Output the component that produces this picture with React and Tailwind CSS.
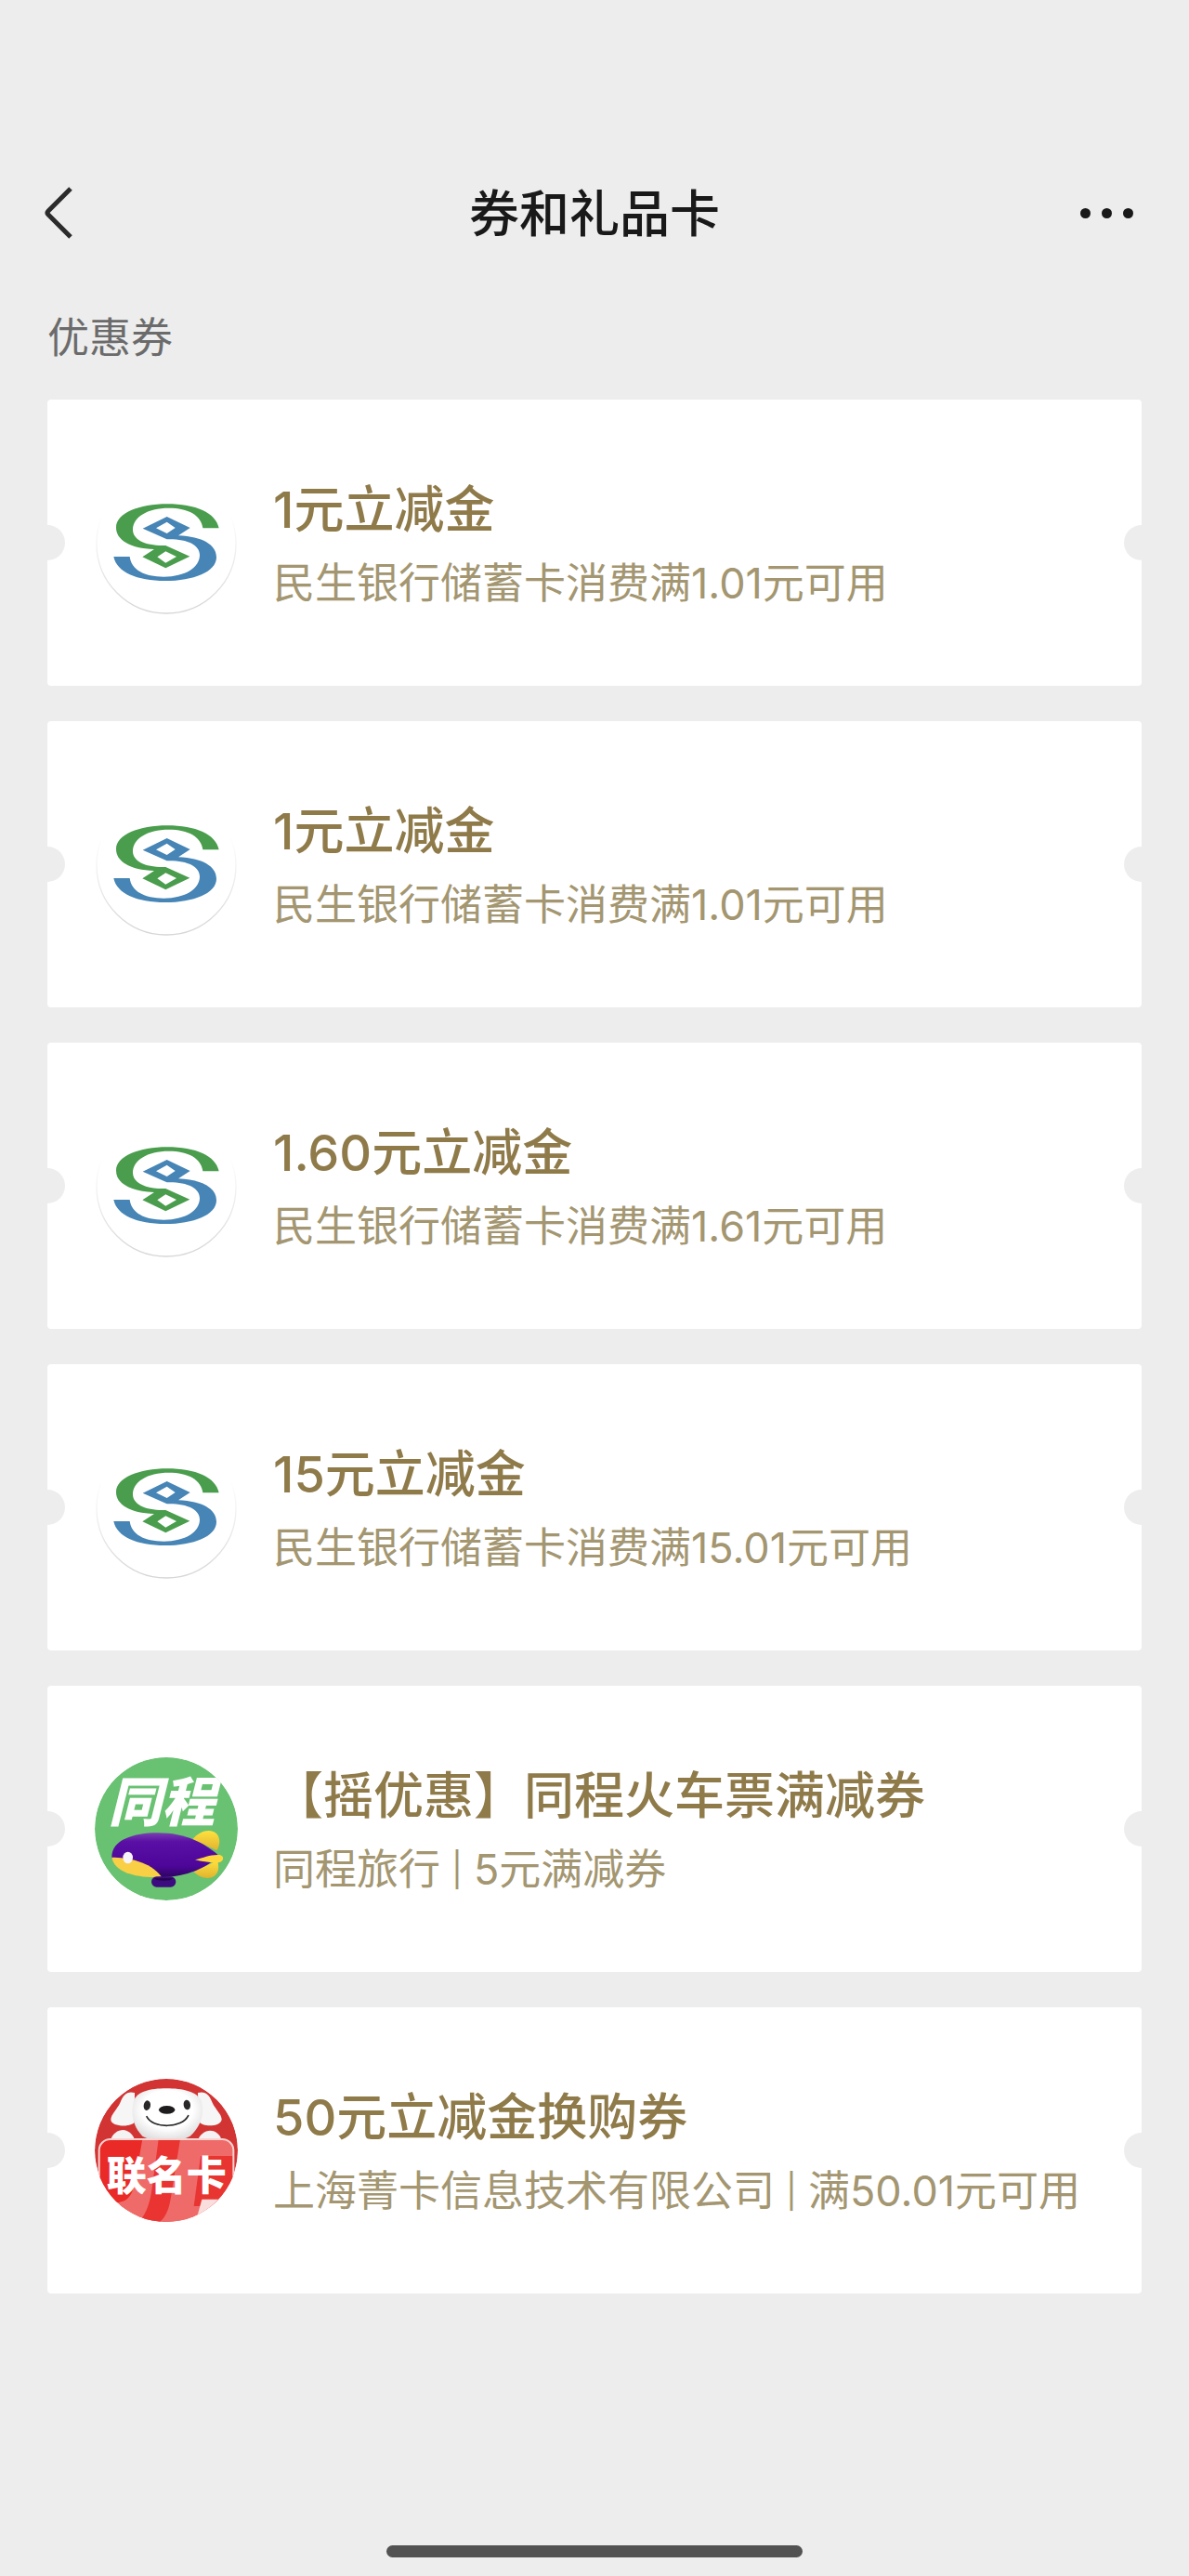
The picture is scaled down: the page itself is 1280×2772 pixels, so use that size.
import { Fragment, useState } from 'react';

const coupons = [
  { id: 1, logo: 'minsheng', title: '1元立减金', desc: ['民生银行储蓄卡消费满1.01元可用'] },
  { id: 2, logo: 'minsheng', title: '1元立减金', desc: ['民生银行储蓄卡消费满1.01元可用'] },
  { id: 3, logo: 'minsheng', title: '1.60元立减金', desc: ['民生银行储蓄卡消费满1.61元可用'] },
  { id: 4, logo: 'minsheng', title: '15元立减金', desc: ['民生银行储蓄卡消费满15.01元可用'] },
  { id: 5, logo: 'tongcheng', title: '【摇优惠】同程火车票满减券', desc: ['同程旅行', '5元满减券'] },
  { id: 6, logo: 'jd', title: '50元立减金换购券', desc: ['上海菁卡信息技术有限公司', '满50.01元可用'] },
];

const S_PATH =
  'M437 175H385C380 133 338 110 275 110C205 110 159 140 159 180C159 213 200 233 265 231L343 266L265 304L190 268L228 243C150 240 105 213 105 173C105 126 180 97 270 97C362 97 427 125 437 175ZM265 250L238 268L265 287L300 267Z';

function MinshengLogo() {
  return (
    <svg viewBox="36 -9 462 462" className="size-full" aria-hidden="true">
      <defs>
        <linearGradient id="ring" x1="0" y1="0" x2="0" y2="1">
          <stop offset="0.3" stopColor="#ffffff" />
          <stop offset="1" stopColor="#d6d6d6" />
        </linearGradient>
      </defs>
      <circle cx="267" cy="225" r="225" fill="#fff" stroke="url(#ring)" strokeWidth="4" />
      <path d={S_PATH} fill="#4a9d4d" fillRule="evenodd" />
      <path d={S_PATH} fill="#4685b5" fillRule="evenodd" transform="rotate(180 267 221)" />
    </svg>
  );
}

function TongchengLogo() {
  return (
    <svg viewBox="36 33 462 462" className="size-full" aria-hidden="true">
      <defs>
        <clipPath id="tc-clip">
          <circle cx="267" cy="264" r="231" />
        </clipPath>
        <linearGradient id="tc-body" x1="0" y1="0" x2="0" y2="1">
          <stop offset="0" stopColor="#7a3fb0" />
          <stop offset="0.2" stopColor="#5a0fa5" />
          <stop offset="0.75" stopColor="#4d0699" />
          <stop offset="1" stopColor="#2d0560" />
        </linearGradient>
        <linearGradient id="tc-fin" x1="0" y1="0" x2="0" y2="1">
          <stop offset="0" stopColor="#ffe13f" />
          <stop offset="1" stopColor="#e0b32e" />
        </linearGradient>
      </defs>
      <g clipPath="url(#tc-clip)">
        <circle cx="267" cy="264" r="231" fill="#68c272" />
        <text
          x="80"
          y="240"
          fill="#fff"
          fontSize="172"
          fontWeight="900"
          fontStyle="italic"
          fontFamily="'Noto Sans CJK SC', sans-serif"
        >
          同程
        </text>
        <path d="M352 298C370 276 395 266 417 272C442 280 444 312 430 334Z" fill="url(#tc-fin)" />
        <path d="M355 402C375 422 402 428 420 418C438 406 438 384 432 366Z" fill="url(#tc-fin)" />
        <path d="M91 356C90 300 160 277 240 277C330 277 390 310 436 350C400 390 330 418 258 420C210 420 110 400 91 356Z" fill="url(#tc-body)" />
        <path d="M91 356C140 356 215 368 252 419C180 424 100 408 91 356Z" fill="#f8cf45" />
        <path d="M360 364C390 356 410 346 440 348C455 352 453 368 440 372C412 374 385 370 360 364Z" fill="#ffd83e" />
        <ellipse cx="143" cy="357" rx="16" ry="19" fill="#f6f3fa" />
        <rect x="219" y="418" width="79" height="34" rx="17" fill="#3d0b80" />
        <path d="M226 424H290C280 434 240 434 226 424Z" fill="#24024d" />
      </g>
    </svg>
  );
}

function JdLogo() {
  return (
    <svg viewBox="36 51 462 462" className="size-full" aria-hidden="true">
      <defs>
        <clipPath id="jd-clip">
          <circle cx="267" cy="282" r="231" />
        </clipPath>
        <clipPath id="jd-card">
          <rect x="50" y="246" width="434" height="300" rx="36" />
        </clipPath>
        <radialGradient id="jd-face" cx="0.5" cy="0.4" r="0.6">
          <stop offset="0.6" stopColor="#ffffff" />
          <stop offset="1" stopColor="#dedede" />
        </radialGradient>
      </defs>
      <g clipPath="url(#jd-clip)">
        <circle cx="267" cy="282" r="231" fill="#d13433" />
        <path d="M165 96C140 90 128 102 118 128C108 150 88 165 88 184C90 206 150 208 164 192Z" fill="#f7f6f6" />
        <path d="M369 96C394 90 406 102 416 128C426 150 446 165 446 182C444 206 384 208 372 188Z" fill="#f7f6f6" />
        <path d="M86 252C94 222 120 212 138 218C155 224 164 240 166 252Z" fill="#f4f2f2" />
        <path d="M368 252C374 228 400 212 420 220C438 228 444 240 446 252Z" fill="#f4f2f2" />
        <path d="M267 82C215 82 172 92 162 122C152 160 156 200 190 236C230 258 304 258 344 236C380 204 392 160 380 122C366 92 320 82 267 82Z" fill="url(#jd-face)" />
        <ellipse cx="205" cy="137" rx="11" ry="16" fill="#2b2829" transform="rotate(10 205 137)" />
        <ellipse cx="334" cy="135" rx="11" ry="16" fill="#2b2829" transform="rotate(-10 334 135)" />
        <ellipse cx="269" cy="151" rx="26" ry="13" fill="#1f1c1d" />
        <path d="M204 173C222 212 318 212 338 170" fill="none" stroke="#2b2829" strokeWidth="5" strokeLinecap="round" />
        <g clipPath="url(#jd-card)">
          <rect x="50" y="246" width="434" height="300" fill="#ef6b69" />
          <path d="M50 246H190L166 380C158 440 130 452 96 450H50Z" fill="#ea2a26" />
          <path d="M242 246H312L284 420C276 480 262 500 244 515H176C206 486 218 440 224 380Z" fill="#e93431" />
          <path d="M378 300H484V462H356Z" fill="#e83532" />
          <path d="M382 440H484V520H360Z" fill="#f9dedd" />
        </g>
        <rect x="50" y="246" width="434" height="300" rx="36" fill="none" stroke="#fbd3d1" strokeWidth="6" />
        <text
          x="74"
          y="410"
          fill="#fff"
          fontSize="129"
          fontWeight="900"
          fontFamily="'Noto Sans CJK SC', sans-serif"
        >
          联名卡
        </text>
      </g>
    </svg>
  );
}

const logos = {
  minsheng: MinshengLogo,
  tongcheng: TongchengLogo,
  jd: JdLogo,
};

function CouponCard({ coupon, selected, onSelect }) {
  const Logo = logos[coupon.logo];

  return (
    <li>
      <button
        type="button"
        aria-pressed={selected}
        onClick={() => onSelect(coupon.id)}
        className="relative flex w-full items-center gap-[38px] overflow-hidden rounded-sm bg-white px-[51px] py-[73px] text-left"
      >
        {/* Encoches du ticket */}
        <span className="absolute top-1/2 left-0 size-[38px] -translate-1/2 rounded-full bg-[#ededed]" />
        <span className="absolute top-1/2 right-0 size-[38px] translate-x-1/2 -translate-y-1/2 rounded-full bg-[#ededed]" />

        <span className="size-[154px] shrink-0">
          <Logo />
        </span>
        <span className="min-w-0 flex-1 pt-1 whitespace-nowrap">
          <span className="block text-[54px] leading-[84px] font-medium text-[#8f7a4a]">{coupon.title}</span>
          <span className="flex items-center text-[45px] leading-[74px] text-[#a39671]">
            {coupon.desc.map((part, i) => (
              <Fragment key={part}>
                {i > 0 && <span className="px-3 text-4xl leading-[74px]">|</span>}
                <span>{part}</span>
              </Fragment>
            ))}
          </span>
        </span>
      </button>
    </li>
  );
}

export default function App() {
  const [selectedId, setSelectedId] = useState(null);

  return (
    <div className="flex min-h-screen flex-col bg-[#ededed] font-[Inter,'Noto_Sans_CJK_SC',sans-serif]">
      {/* Barre de navigation */}
      <header className="grid grid-cols-[1fr_auto_1fr] items-center px-12 pt-[152px]">
        <button type="button" aria-label="返回" className="flex h-[154px] w-20 items-center">
          <svg viewBox="0 0 30 56" className="h-14 w-[30px]" fill="none" stroke="#2b2b2b" strokeWidth="5">
            <path d="M28 2L4 26Q2 28 4 30L28 54" />
          </svg>
        </button>
        <h1 className="pt-1 text-[54px] leading-[84px] font-medium text-[#191919]">券和礼品卡</h1>
        <button type="button" aria-label="更多" className="flex h-[154px] w-20 items-center justify-end gap-3 justify-self-end pr-3">
          <span className="size-[11px] rounded-full bg-[#191919]" />
          <span className="size-[11px] rounded-full bg-[#191919]" />
          <span className="size-[11px] rounded-full bg-[#191919]" />
        </button>
      </header>

      {/* Liste des coupons */}
      <main className="flex-1 px-[51px] pt-8 pb-12">
        <h2 className="text-[45px] leading-[52px] text-[#6b6b6b]">优惠券</h2>
        <ul className="mt-10 flex flex-col gap-[38px]">
          {coupons.map((coupon) => (
            <CouponCard
              key={coupon.id}
              coupon={coupon}
              selected={coupon.id === selectedId}
              onSelect={setSelectedId}
            />
          ))}
        </ul>
      </main>

      <div className="mx-auto mb-5 h-[13px] w-[35%] rounded-full bg-[#525252]" />
    </div>
  );
}
